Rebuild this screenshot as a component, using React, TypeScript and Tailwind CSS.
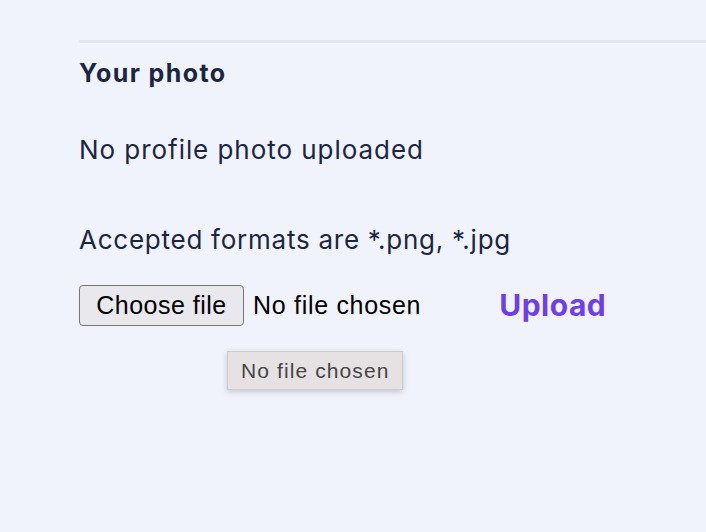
import React from 'react';

const App: React.FC = () => {
  return (
    <div className="min-h-[532px] w-[706px] bg-[#f0f3fc] pt-[40px] pl-[79px] overflow-hidden" style={{ fontFamily: 'Inter, "Noto Sans", sans-serif' }}>
      {/* Photo section */}
      <div className="border-t-[3px] border-[#e2e6f0] text-[#1b2643]">
        <h2 className="mt-[15px] text-[25px] font-bold leading-[30px] tracking-[1.4px]">Your photo</h2>
        <p className="mt-[46px] text-[26px] leading-[32px] tracking-[0.95px]">No profile photo uploaded</p>
        <p className="mt-[58px] text-[26px] leading-[32px] tracking-[0.75px]">Accepted formats are *.png, *.jpg</p>

        <div className="mt-[27px] flex items-center">
          <div className="flex items-center" style={{ fontFamily: '"Liberation Sans", Arial, sans-serif' }}>
            <button className="h-[41px] w-[165px] rounded-[4px] border border-[#767676] bg-[#e9e9ed] text-[25px] tracking-[0.5px] text-black">
              Choose file
            </button>
            <span className="ml-[9px] text-[25px] tracking-[0.7px] text-black">No file chosen</span>
          </div>
          <button className="ml-[78px] text-[30px] font-bold tracking-[0.5px] text-[#6e3fe8]">Upload</button>
        </div>

        <div className="relative">
          <div
            className="absolute left-[148px] top-[23px] border border-[#cfcbcd] bg-[#e6e2e4] px-[13px] py-[5px] text-[21px] leading-[27px] tracking-[1.1px] text-[#454545] shadow-[0_2px_6px_rgba(0,0,0,0.18)]"
            style={{ fontFamily: '"Liberation Sans", Arial, sans-serif' }}
          >
            No file chosen
          </div>
        </div>
      </div>
    </div>
  );
};

export default App;
